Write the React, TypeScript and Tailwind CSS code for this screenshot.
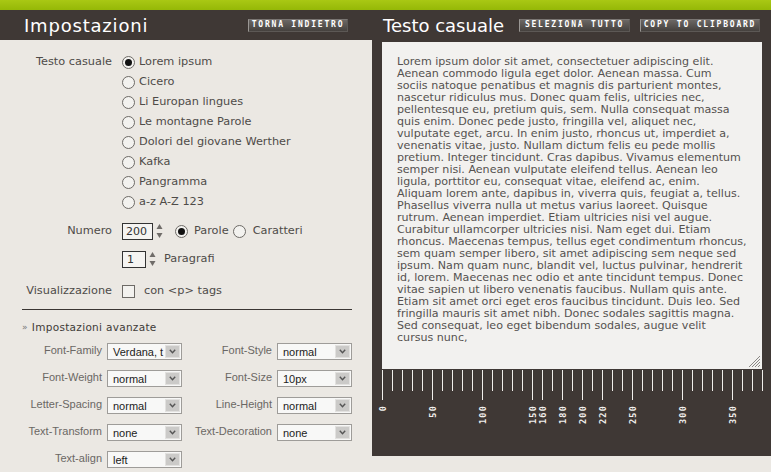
import type React from "react"

const loremLines: string[] = [
  "Lorem ipsum dolor sit amet, consectetuer adipiscing elit.",
  "Aenean commodo ligula eget dolor. Aenean massa. Cum",
  "sociis natoque penatibus et magnis dis parturient montes,",
  "nascetur ridiculus mus. Donec quam felis, ultricies nec,",
  "pellentesque eu, pretium quis, sem. Nulla consequat massa",
  "quis enim. Donec pede justo, fringilla vel, aliquet nec,",
  "vulputate eget, arcu. In enim justo, rhoncus ut, imperdiet a,",
  "venenatis vitae, justo. Nullam dictum felis eu pede mollis",
  "pretium. Integer tincidunt. Cras dapibus. Vivamus elementum",
  "semper nisi. Aenean vulputate eleifend tellus. Aenean leo",
  "ligula, porttitor eu, consequat vitae, eleifend ac, enim.",
  "Aliquam lorem ante, dapibus in, viverra quis, feugiat a, tellus.",
  "Phasellus viverra nulla ut metus varius laoreet. Quisque",
  "rutrum. Aenean imperdiet. Etiam ultricies nisi vel augue.",
  "Curabitur ullamcorper ultricies nisi. Nam eget dui. Etiam",
  "rhoncus. Maecenas tempus, tellus eget condimentum rhoncus,",
  "sem quam semper libero, sit amet adipiscing sem neque sed",
  "ipsum. Nam quam nunc, blandit vel, luctus pulvinar, hendrerit",
  "id, lorem. Maecenas nec odio et ante tincidunt tempus. Donec",
  "vitae sapien ut libero venenatis faucibus. Nullam quis ante.",
  "Etiam sit amet orci eget eros faucibus tincidunt. Duis leo. Sed",
  "fringilla mauris sit amet nibh. Donec sodales sagittis magna.",
  "Sed consequat, leo eget bibendum sodales, augue velit",
  "cursus nunc,",
]

const textOptions: string[] = [
  "Lorem ipsum",
  "Cicero",
  "Li Europan lingues",
  "Le montagne Parole",
  "Dolori del giovane Werther",
  "Kafka",
  "Pangramma",
  "a-z A-Z 123",
]

const marks: number[] = [0, 50, 100, 150, 160, 180, 200, 220, 250, 300, 350]

function DarkButton({ label, width }: { label: string; width: string }): React.ReactElement {
  return (
    <button
      className={`${width} h-[13px] flex items-center justify-center border border-[#5c5855] border-l-[#9a9794] border-t-[#7a7673] bg-gradient-to-b from-[#6b6764] to-[#45413e] text-[8px] leading-none tracking-[1.8px] text-white font-bold font-['DejaVu_Sans_Mono',monospace]`}
    >
      {label}
    </button>
  )
}

function Radio({ checked = false }: { checked?: boolean }): React.ReactElement {
  return (
    <span className="w-[13px] h-[13px] rounded-full border border-[#6d6a66] bg-[#f3f2ef] flex items-center justify-center shrink-0">
      {checked && <span className="w-[7px] h-[7px] rounded-full bg-[#111]" />}
    </span>
  )
}

function Spinner(): React.ReactElement {
  return (
    <svg width="7" height="16" viewBox="0 0 7 16" className="shrink-0">
      <path d="M3.5 1 L6.5 6 L0.5 6 Z" fill="#6f6c69" />
      <path d="M0.5 10 L6.5 10 L3.5 15 Z" fill="#6f6c69" />
    </svg>
  )
}

function Select({ value }: { value: string }): React.ReactElement {
  return (
    <div className="w-[75px] h-[17px] flex border border-[#9e9c99] bg-[#f8f8f7]">
      <span className="flex-1 overflow-hidden whitespace-nowrap pl-[5px] text-[11px] leading-[16px] text-[#222] font-['Liberation_Sans',Arial,sans-serif]">
        {value}
      </span>
      <span className="w-[15px] m-[1px] bg-[#cbcac8] border border-[#e2e1df] flex items-center justify-center">
        <svg width="7" height="5" viewBox="0 0 7 5">
          <path d="M0.8 0.8 L3.5 3.8 L6.2 0.8" fill="none" stroke="#555" strokeWidth="1.4" />
        </svg>
      </span>
    </div>
  )
}

function SelectField({ label, value, labelWidth }: { label: string; value: string; labelWidth: string }): React.ReactElement {
  return (
    <div className="flex items-start gap-[5px]">
      <span className={`${labelWidth} text-right text-[11px] leading-[14px] text-[#6a6764] font-['Liberation_Sans',Arial,sans-serif]`}>
        {label}
      </span>
      <Select value={value} />
    </div>
  )
}

function Ruler(): React.ReactElement {
  const ticks: number[] = Array.from({ length: 39 }, (_, i) => i * 10)
  return (
    <svg width="399" height="87" viewBox="0 0 399 87">
      {ticks.map((t) => {
        const x = 10.5 + t
        const long = marks.includes(t)
        return <line key={t} x1={x} x2={x} y1={1} y2={long ? 31 : 22} stroke="#f1efec" strokeWidth="1" />
      })}
      {marks.map((m) => (
        <text
          key={m}
          transform={`translate(${13.5 + m},36) rotate(-90)`}
          textAnchor="end"
          fontSize="8.5"
          fontWeight="bold"
          letterSpacing="1.2"
          fill="#f1efec"
          fontFamily="'DejaVu Sans Mono', monospace"
        >
          {m}
        </text>
      ))}
    </svg>
  )
}

export default function App(): React.ReactElement {
  return (
    <div className="w-[771px] h-[472px] overflow-hidden bg-[#ebe8e3] font-['DejaVu_Sans',Verdana,sans-serif]">
      <div className="h-[10px] bg-gradient-to-b from-[#a9c814] to-[#95b806]" />
      <div className="flex">
        {/* Settings */}
        <div className="w-[372px]">
          <div className="h-[30px] bg-[#3f3835] flex items-center justify-between pl-[24px] pr-[24px]">
            <h1 className="text-[18px] leading-none text-white pt-[2px] tracking-[0.8px]">Impostazioni</h1>
            <DarkButton label="TORNA INDIETRO" width="w-[100px]" />
          </div>

          <div className="pt-[12px] text-[11.3px] text-[#4e4b48]">
            <div className="flex">
              <span className="w-[112px] text-right leading-[20px]">Testo casuale</span>
              <div className="pl-[10px] flex flex-col">
                {textOptions.map((o, i) => (
                  <label key={o} className="h-[20px] flex items-center gap-[4px] whitespace-nowrap">
                    <Radio checked={i === 0} />
                    <span>{o}</span>
                  </label>
                ))}
              </div>
            </div>

            <div className="flex h-[20px] mt-[9px] items-center">
              <span className="w-[112px] text-right">Numero</span>
              <div className="pl-[10px] flex items-center">
                <span className="w-[31px] h-[17px] border border-[#333] bg-[#f5f4f2] pl-[3px] leading-[15px] text-[11px] text-[#333]">200</span>
                <span className="ml-[3px]"><Spinner /></span>
                <span className="ml-[12px]"><Radio checked /></span>
                <span className="ml-[6px]">Parole</span>
                <span className="ml-[4px]"><Radio /></span>
                <span className="ml-[7px]">Caratteri</span>
              </div>
            </div>

            <div className="flex h-[20px] mt-[8px] items-center">
              <span className="w-[112px]" />
              <div className="pl-[10px] flex items-center">
                <span className="w-[24px] h-[17px] border border-[#333] bg-[#f5f4f2] pl-[4px] leading-[15px] text-[11px] text-[#333]">1</span>
                <span className="ml-[3px]"><Spinner /></span>
                <span className="ml-[8px]">Paragrafi</span>
              </div>
            </div>

            <div className="flex h-[20px] mt-[12px] items-center">
              <span className="w-[112px] text-right">Visualizzazione</span>
              <div className="pl-[10px] flex items-center">
                <span className="w-[13px] h-[13px] border border-[#6d6a66] bg-[#f3f2ef]" />
                <span className="ml-[9px]">con &lt;p&gt; tags</span>
              </div>
            </div>

            <div className="ml-[22px] w-[330px] h-px bg-[#3a3633] mt-[8px]" />

            <div className="ml-[22px] mt-[11px] h-[14px] flex items-center text-[10.5px] text-[#3e3b38] tracking-[0.3px]">
              <span className="text-[#777] text-[9px] mr-[4px]">»</span>
              Impostazioni avanzate
            </div>

            <div className="mt-[8px] flex flex-col gap-[10px]">
              <div className="flex">
                <SelectField label="Font-Family" value="Verdana, t" labelWidth="w-[102px]" />
                <div className="ml-[11px]"><SelectField label="Font-Style" value="normal" labelWidth="w-[79px]" /></div>
              </div>
              <div className="flex">
                <SelectField label="Font-Weight" value="normal" labelWidth="w-[102px]" />
                <div className="ml-[11px]"><SelectField label="Font-Size" value="10px" labelWidth="w-[79px]" /></div>
              </div>
              <div className="flex">
                <SelectField label="Letter-Spacing" value="normal" labelWidth="w-[102px]" />
                <div className="ml-[11px]"><SelectField label="Line-Height" value="normal" labelWidth="w-[79px]" /></div>
              </div>
              <div className="flex">
                <SelectField label="Text-Transform" value="none" labelWidth="w-[102px]" />
                <div className="ml-[11px]"><SelectField label="Text-Decoration" value="none" labelWidth="w-[79px]" /></div>
              </div>
              <div className="flex">
                <SelectField label="Text-align" value="left" labelWidth="w-[102px]" />
              </div>
            </div>
          </div>
        </div>

        {/* Random text */}
        <div className="w-[399px] h-[446px] bg-[#3f3835]">
          <div className="h-[30px] flex items-center pl-[11px] pr-[11px]">
            <h2 className="text-[18px] leading-none text-white pt-[2px]">Testo casuale</h2>
            <div className="ml-auto flex gap-[10px]">
              <DarkButton label="SELEZIONA TUTTO" width="w-[111px]" />
              <DarkButton label="COPY TO CLIPBOARD" width="w-[120px]" />
            </div>
          </div>
          <div className="relative ml-[10px] mt-[2px] w-[380px] h-[327px] bg-[#f2f1ef] pt-[14px] pl-[15px] text-[11.1px] leading-[12px] text-[#55524f]">
            {loremLines.map((l, i) => (
              <div key={i} className="whitespace-nowrap">{l}</div>
            ))}
            <svg width="14" height="14" viewBox="0 0 14 14" className="absolute right-[1px] bottom-[1px]">
              <path d="M13 2 L2 13 M13 5 L5 13 M13 8 L8 13 M13 11 L11 13" stroke="#8a8784" strokeWidth="1" />
            </svg>
          </div>
          <Ruler />
        </div>
      </div>
    </div>
  )
}
